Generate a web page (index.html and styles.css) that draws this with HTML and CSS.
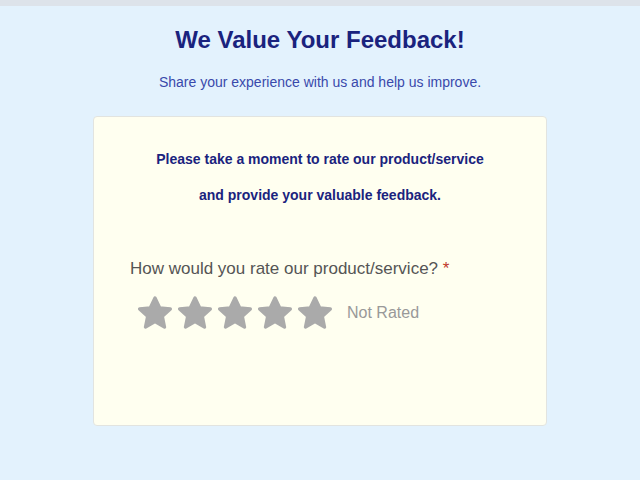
FILE: index.html
```html
<!DOCTYPE html>
<html lang="en">
  <head>
    <meta charset="UTF-8" />
    <meta name="viewport" content="width=device-width, initial-scale=1.0" />
    <title>Feedback</title>
    <link rel="stylesheet" href="styles.css">
  </head>
  <body>
    <div class="topbar"></div>
    <h1>We Value Your Feedback!</h1>
    <p class="subtitle">Share your experience with us and help us improve.</p>
    <div class="card">
      <p class="intro">Please take a moment to rate our product/service<br>and provide your valuable feedback.</p>
      <div class="question">How would you rate our product/service? <span class="required">*</span></div>
      <div class="rating">
        <svg class="star" viewBox="1.8 1.6 20.4 20.4"><path d="M12 2.8l2.8 5.9 6.4.7-4.8 4.4 1.3 6.4L12 17l-5.7 3.2 1.3-6.4-4.8-4.4 6.4-.7z"/></svg>
        <svg class="star" viewBox="1.8 1.6 20.4 20.4"><path d="M12 2.8l2.8 5.9 6.4.7-4.8 4.4 1.3 6.4L12 17l-5.7 3.2 1.3-6.4-4.8-4.4 6.4-.7z"/></svg>
        <svg class="star" viewBox="1.8 1.6 20.4 20.4"><path d="M12 2.8l2.8 5.9 6.4.7-4.8 4.4 1.3 6.4L12 17l-5.7 3.2 1.3-6.4-4.8-4.4 6.4-.7z"/></svg>
        <svg class="star" viewBox="1.8 1.6 20.4 20.4"><path d="M12 2.8l2.8 5.9 6.4.7-4.8 4.4 1.3 6.4L12 17l-5.7 3.2 1.3-6.4-4.8-4.4 6.4-.7z"/></svg>
        <svg class="star" viewBox="1.8 1.6 20.4 20.4"><path d="M12 2.8l2.8 5.9 6.4.7-4.8 4.4 1.3 6.4L12 17l-5.7 3.2 1.3-6.4-4.8-4.4 6.4-.7z"/></svg>
        <span class="rating-text">Not Rated</span>
      </div>
    </div>
  </body>
</html>
```

FILE: styles.css
```css
body {
  margin: 0;
  background-color: #e3f2fd;
  font-family: "Liberation Sans", Arial, sans-serif;
  text-align: center;
}
.topbar {
  height: 6px;
  background-color: #dde3ea;
}
h1 {
  margin: 19px 0 0;
  font-size: 24px;
  line-height: 30px;
  color: #1a237e;
}
.subtitle {
  margin: 17px 0 0;
  font-size: 14px;
  line-height: 20px;
  color: #3949ab;
}
.card {
  box-sizing: border-box;
  width: 454px;
  height: 310px;
  margin: 24px auto 0;
  padding: 24px 36px 0;
  background-color: #fffff0;
  border: 1px solid #e2e4e0;
  border-radius: 4px;
  text-align: left;
}
.intro {
  margin: 0;
  font-size: 14px;
  font-weight: bold;
  line-height: 36px;
  color: #1a237e;
  text-align: center;
}
.question {
  margin-top: 44px;
  font-size: 17px;
  line-height: 24px;
  color: #555;
}
.required {
  color: #c0392b;
}
.rating {
  display: flex;
  align-items: center;
  gap: 6px;
  margin-top: 15px;
  padding-left: 8px;
}
.star {
  width: 34px;
  height: 34px;
  fill: #aaa;
  stroke: #aaa;
  stroke-width: 2;
  stroke-linejoin: round;
}
.rating-text {
  margin-left: 9px;
  font-size: 16px;
  color: #999;
}
```
